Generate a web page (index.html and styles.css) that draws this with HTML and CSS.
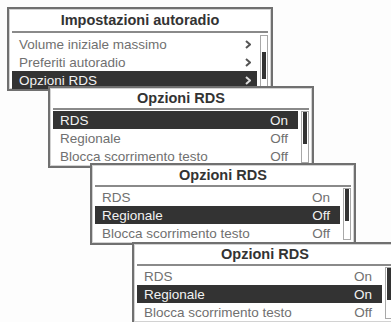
FILE: index.html
```html
<!DOCTYPE html>
<html lang="en">

<head>
    <meta charset="UTF-8">
    <meta name="viewport" content="width=device-width, initial-scale=1.0">
    <title>Impostazioni autoradio</title>

    <link rel="stylesheet" href="styles.css">

</head>

<body>

    <div class="screen">

        <!-- menu principale -->
        <div class="panel p1">
            <div class="title">Impostazioni autoradio</div>
            <div class="body">
                <ul class="list">
                    <li class="row">Volume iniziale massimo
                        <svg class="chev" viewBox="0 0 6 9"><path d="M1 1 L5 4.5 L1 8"/></svg>
                    </li>
                    <li class="row">Preferiti autoradio
                        <svg class="chev" viewBox="0 0 6 9"><path d="M1 1 L5 4.5 L1 8"/></svg>
                    </li>
                    <li class="row sel">Opzioni RDS
                        <svg class="chev" viewBox="0 0 6 9"><path d="M1 1 L5 4.5 L1 8"/></svg>
                    </li>
                </ul>
                <div class="track"><span class="thumb low"></span></div>
            </div>
        </div>

        <div class="panel p2">
            <div class="title">Opzioni RDS</div>
            <div class="body">
                <ul class="list">
                    <li class="row sel">RDS <span>On</span></li>
                    <li class="row">Regionale <span>Off</span></li>
                    <li class="row">Blocca scorrimento testo <span>Off</span></li>
                </ul>
                <div class="track"><span class="thumb"></span></div>
            </div>
        </div>

        <div class="panel p3">
            <div class="title">Opzioni RDS</div>
            <div class="body">
                <ul class="list">
                    <li class="row">RDS <span>On</span></li>
                    <li class="row sel">Regionale <span>Off</span></li>
                    <li class="row">Blocca scorrimento testo <span>Off</span></li>
                </ul>
                <div class="track"><span class="thumb"></span></div>
            </div>
        </div>

        <div class="panel p4">
            <div class="title">Opzioni RDS</div>
            <div class="body">
                <ul class="list">
                    <li class="row">RDS <span>On</span></li>
                    <li class="row sel">Regionale <span>On</span></li>
                    <li class="row">Blocca scorrimento testo <span>Off</span></li>
                </ul>
                <div class="track"><span class="thumb"></span></div>
            </div>
        </div>

    </div>

</body>

</html>
```

FILE: styles.css
```css
* {
    font-family: 'Liberation Sans', Arial, sans-serif;
    box-sizing: border-box;
}

body {
    margin: 0;
    background-color: #fdfdfd;
}

.screen {
    position: relative;
    width: 391px;
    height: 322px;
    overflow: hidden;
}

/* each screen is a window stacked over the previous one */
.panel {
    position: absolute;
    width: 266px;
    height: 82px;
    background-color: #fff;
    border: 2px solid #707070;
    box-shadow: inset 0 0 0 1px #d2d2d2;
    padding: 0 3px;
}

.p1 { left: 7px;   top: 7px; height: 84px; }
.p2 { left: 48px;  top: 86px; }
.p3 { left: 90px;  top: 163px; }
.p4 { left: 132px; top: 242px; }

.title {
    height: 22px;
    line-height: 20px;
    text-align: center;
    font-size: 14.5px;
    font-weight: bold;
    color: #333;
    border-bottom: 2px solid #8a8a8a;
}

.p1 .title {
    height: 24px;
    line-height: 22px;
}

.body {
    display: flex;
    gap: 3px;
    margin-top: 1px;
}

.p1 .body {
    margin-top: 2px;
}

.list {
    flex: 1;
    margin: 0;
    padding: 0;
    list-style: none;
}

.row {
    display: flex;
    justify-content: space-between;
    align-items: center;
    height: 18px;
    padding: 0 10px 0 7px;
    font-size: 13.5px;
    color: #707070;
    white-space: nowrap;
}

.row.sel {
    background-color: #333;
    color: #f2f2f2;
}

.p1 .row {
    padding-right: 6px;
}

.chev {
    width: 6px;
    height: 9px;
    fill: none;
    stroke: #555;
    stroke-width: 2;
}

.sel .chev {
    stroke: #ddd;
}

.track {
    width: 8px;
    height: 52px;
    border: 1px solid #a8a8a8;
    background-color: #fff;
    padding: 0 1px;
}

.thumb {
    display: block;
    height: 32px;
    background-color: #333;
}

.thumb.low {
    height: 27px;
    margin-top: 16px;
}
```
